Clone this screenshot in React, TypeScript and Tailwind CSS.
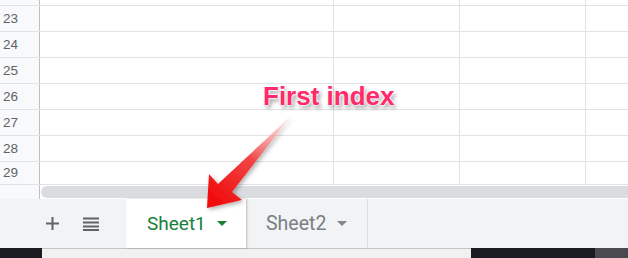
import React from "react";

const rows: { n: number; h: string }[] = [
  { n: 22, h: "h-[6px]" },
  { n: 23, h: "h-[26px]" },
  { n: 24, h: "h-[26px]" },
  { n: 25, h: "h-[26px]" },
  { n: 26, h: "h-[26px]" },
  { n: 27, h: "h-[26px]" },
  { n: 28, h: "h-[26px]" },
  { n: 29, h: "h-[23px]" },
];

function Triangle({ color }: { color: string }) {
  return (
    <svg width="10" height="5" viewBox="0 0 10 5" className="shrink-0">
      <path d="M0 0 L10 0 L5 5 Z" fill={color} />
    </svg>
  );
}

export default function App() {
  return (
    <div
      className="relative w-[628px] h-[258px] overflow-hidden bg-white flex flex-col"
      style={{ fontFamily: "Roboto, 'Liberation Sans', Arial, sans-serif" }}
    >
      {/* grid */}
      <div className="flex flex-col">
        {rows.map((r) => (
          <div key={r.n} className={`flex ${r.h} border-b border-[#e2e2e2]`}>
            <div
              className="w-[40px] shrink-0 bg-[#f8f9fa] border-r border-[#c0c0c0] flex items-center pl-[3px] text-[13.5px] text-[#5f6368] leading-none overflow-hidden"
              style={{ fontFamily: "'Liberation Sans', Arial, sans-serif" }}
            >
              {r.n === 22 ? "" : r.n}
            </div>
            <div className="w-[294px] shrink-0 border-r border-[#e2e2e2]" />
            <div className="w-[126px] shrink-0 border-r border-[#e2e2e2]" />
            <div className="w-[126px] shrink-0 border-r border-[#e2e2e2]" />
            <div className="flex-1" />
          </div>
        ))}
      </div>

      {/* horizontal scrollbar */}
      <div className="flex h-[14px]">
        <div className="w-[40px] shrink-0 bg-[#f8f9fa] border-r border-[#c0c0c0]" />
        <div className="flex-1 bg-white pt-[1px] pl-[1px]">
          <div className="h-[12px] rounded-l-full bg-[#dadce0]" />
        </div>
      </div>

      {/* sheet tab bar */}
      <div className="flex h-[49px] bg-[#f1f3f4] items-stretch">
        <div className="flex items-center pl-[46px] w-[126px] shrink-0">
          <svg width="13" height="13" viewBox="0 0 13 13">
            <path d="M5.5 0h2v5.5H13v2H7.5V13h-2V7.5H0v-2h5.5z" fill="#5f6368" />
          </svg>
          <svg width="16" height="14" viewBox="0 0 16 14" className="ml-[24px]">
            <rect x="0" y="0.5" width="16" height="2" fill="#5f6368" />
            <rect x="0" y="4.5" width="16" height="2" fill="#5f6368" />
            <rect x="0" y="8.5" width="16" height="2" fill="#5f6368" />
            <rect x="0" y="12" width="16" height="2" fill="#5f6368" />
          </svg>
        </div>
        <div className="relative z-10 w-[120px] shrink-0 bg-white flex items-center pl-[21px] shadow-[1px_0_2px_rgba(60,64,67,0.3)]">
          <span className="text-[19px] text-[#188038] leading-none">Sheet1</span>
          <span className="ml-[11px]">
            <Triangle color="#188038" />
          </span>
        </div>
        <div className="w-[122px] shrink-0 flex items-center pl-[20px] border-r border-[#dadce0]">
          <span className="text-[19.5px] text-[#7a7f84] leading-none">Sheet2</span>
          <span className="ml-[11px]">
            <Triangle color="#80868b" />
          </span>
        </div>
        <div className="flex-1" />
      </div>

      {/* bottom strip */}
      <div className="flex h-[10px]">
        <div className="w-[42px] shrink-0 bg-[#1b1c22]" />
        <div className="flex-1 bg-[#f1f1f1] border-t border-[#c4c4c4]" />
        <div className="w-[124px] shrink-0 bg-[#1b1c22]" />
        <div className="w-[33px] shrink-0 bg-[#4a4a50]" />
      </div>

      {/* annotation: arrow */}
      <svg
        className="absolute left-0 top-0 z-20 pointer-events-none"
        width="628"
        height="258"
        viewBox="0 0 628 258"
      >
        <defs>
          <linearGradient id="ag" x1="291" y1="116" x2="212" y2="204" gradientUnits="userSpaceOnUse">
            <stop offset="0" stopColor="#ffe0e0" stopOpacity="0.5" />
            <stop offset="0.5" stopColor="#f04444" />
            <stop offset="1" stopColor="#f20808" />
          </linearGradient>
          <filter id="ds" x="-20%" y="-20%" width="140%" height="140%">
            <feDropShadow dx="2" dy="2" stdDeviation="2" floodColor="#000" floodOpacity="0.3" />
          </filter>
        </defs>
        <path
          d="M292 115 L232 192 L242 200 L207 208 L209 174 L218 184 Z"
          fill="url(#ag)"
          filter="url(#ds)"
        />
      </svg>

      {/* annotation: label */}
      <div
        className="absolute left-[263px] top-[83px] z-20 text-[26px] leading-none font-bold text-[#ff2a6a] whitespace-nowrap [text-shadow:0_0_2px_#fff,0_0_2px_#fff,0_0_3px_#fff,2px_3px_4px_rgba(0,0,0,0.45)]"
        style={{ fontFamily: "'Liberation Sans', Arial, sans-serif" }}
      >
        First index
      </div>
    </div>
  );
}
